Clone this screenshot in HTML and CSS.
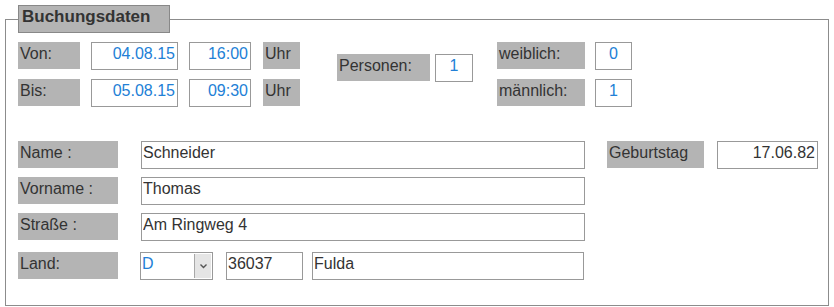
FILE: index.html
```html
<!DOCTYPE html>
<html>
<head>
    <title>Buchungsdaten</title>
    <meta charset="UTF-8">
    <link rel="stylesheet" href="styles.css">
</head>
<body>
    <fieldset class="booking">
        <legend>Buchungsdaten</legend>
        <div class="top-section">
            <div class="dates">
                <div class="row">
                    <span class="label label-short">Von:</span>
                    <input type="text" class="field field-date" value="04.08.15" readonly>
                    <input type="text" class="field field-time" value="16:00" readonly>
                    <span class="label label-unit">Uhr</span>
                </div>
                <div class="row">
                    <span class="label label-short">Bis:</span>
                    <input type="text" class="field field-date" value="05.08.15" readonly>
                    <input type="text" class="field field-time" value="09:30" readonly>
                    <span class="label label-unit">Uhr</span>
                </div>
            </div>
            <div class="persons row">
                <span class="label label-persons">Personen:</span>
                <input type="text" class="field field-count" value="1" readonly>
            </div>
            <div class="gender">
                <div class="row">
                    <span class="label label-gender">weiblich:</span>
                    <input type="text" class="field field-count" value="0" readonly>
                </div>
                <div class="row">
                    <span class="label label-gender">männlich:</span>
                    <input type="text" class="field field-count" value="1" readonly>
                </div>
            </div>
        </div>
        <div class="address">
            <div class="row">
                <span class="label label-wide">Name :</span>
                <input type="text" class="field field-text field-long" value="Schneider" readonly>
                <span class="label label-birthday">Geburtstag</span>
                <input type="text" class="field field-birthday" value="17.06.82" readonly>
            </div>
            <div class="row">
                <span class="label label-wide">Vorname :</span>
                <input type="text" class="field field-text field-long" value="Thomas" readonly>
            </div>
            <div class="row">
                <span class="label label-wide">Straße :</span>
                <input type="text" class="field field-text field-long" value="Am Ringweg 4" readonly>
            </div>
            <div class="row row-land">
                <span class="label label-wide">Land:</span>
                <div class="select">
                    <span class="select-value">D</span>
                    <span class="select-arrow">
                        <svg width="9" height="6" viewBox="0 0 9 6">
                            <path d="M1.5 1.5 L4.5 4.5 L7.5 1.5" fill="none" stroke="#555" stroke-width="1.4"/>
                        </svg>
                    </span>
                </div>
                <input type="text" class="field field-text field-zip" value="36037" readonly>
                <input type="text" class="field field-text field-city" value="Fulda" readonly>
            </div>
        </div>
    </fieldset>
</body>
</html>
```

FILE: styles.css
```css
:root {
    --label-bg: #b4b4b4;
    --field-border: #999999;
    --text-dark: #333333;
    --text-blue: #2280d6;
}

body {
    margin: 0;
    padding: 5px;
    font-family: "Liberation Sans", Arial, sans-serif;
    font-size: 16px;
    color: var(--text-dark);
    background: #fff;
}

.booking {
    margin: 0;
    padding: 9px 0 25px 12px;
    width: 824px;
    box-sizing: border-box;
    border: 1px solid #8c8c8c;
}

.booking legend {
    margin-left: 0;
    padding: 0 0 4px 3px;
    width: 152px;
    box-sizing: border-box;
    background: var(--label-bg);
    border: 1px solid #888;
    font-weight: bold;
    font-size: 17px;
    line-height: 22px;
    color: var(--text-dark);
}

.row {
    display: flex;
    align-items: flex-start;
}

.label {
    display: block;
    box-sizing: border-box;
    height: 27px;
    padding: 0 0 3px 2px;
    line-height: 24px;
    background: var(--label-bg);
    white-space: nowrap;
}

.field {
    display: block;
    box-sizing: border-box;
    height: 28px;
    margin: 0;
    padding: 0 2px 4px 2px;
    border: 1px solid var(--field-border);
    background: #fff;
    font-family: "Liberation Sans", Arial, sans-serif;
    font-size: 16px;
    line-height: 22px;
    color: var(--text-blue);
    text-align: right;
    outline: none;
}

.field-text {
    color: var(--text-dark);
    text-align: left;
    padding-left: 1px;
}

/* Zeitraum */
.top-section {
    display: flex;
    align-items: flex-start;
}

.dates {
    display: flex;
    flex-direction: column;
    gap: 9px;
}

.label-short { width: 62px; margin-right: 11px; }
.field-date { width: 87px; margin-right: 11px; }
.field-time { width: 62px; margin-right: 12px; }
.label-unit { width: 37px; }

.persons {
    margin: 12px 0 0 37px;
}

.label-persons { width: 93px; margin-right: 5px; }

.field-count {
    width: 38px;
    text-align: center;
    padding: 0 0 4px 0;
}

.gender {
    display: flex;
    flex-direction: column;
    gap: 9px;
    margin-left: 24px;
}

.label-gender { width: 88px; margin-right: 10px; }
.gender .field-count { width: 37px; }

/* Adresse */
.address {
    display: flex;
    flex-direction: column;
    gap: 8px;
    margin-top: 34px;
}

.address .row-land {
    margin-top: 3px;
}

.label-wide { width: 100px; margin-right: 23px; }
.field-long { width: 444px; margin-right: 22px; }
.label-birthday { width: 97px; margin-right: 13px; }
.field-birthday { width: 101px; color: var(--text-dark); }

.row-land .label-wide { margin-right: 22px; }

.select {
    display: flex;
    box-sizing: border-box;
    width: 73px;
    height: 28px;
    margin-right: 13px;
    border: 1px solid var(--field-border);
    background: #fff;
}

.select-value {
    flex: 1;
    padding-left: 1px;
    line-height: 22px;
    color: var(--text-blue);
}

.select-arrow {
    display: flex;
    align-items: center;
    justify-content: center;
    width: 16px;
    margin: 1px 1px 1px 0;
    background: #e5e5e5;
    border-left: 1px solid #a8a8a8;
}

.field-zip { width: 77px; margin-right: 9px; }
.field-city { width: 272px; }
```
